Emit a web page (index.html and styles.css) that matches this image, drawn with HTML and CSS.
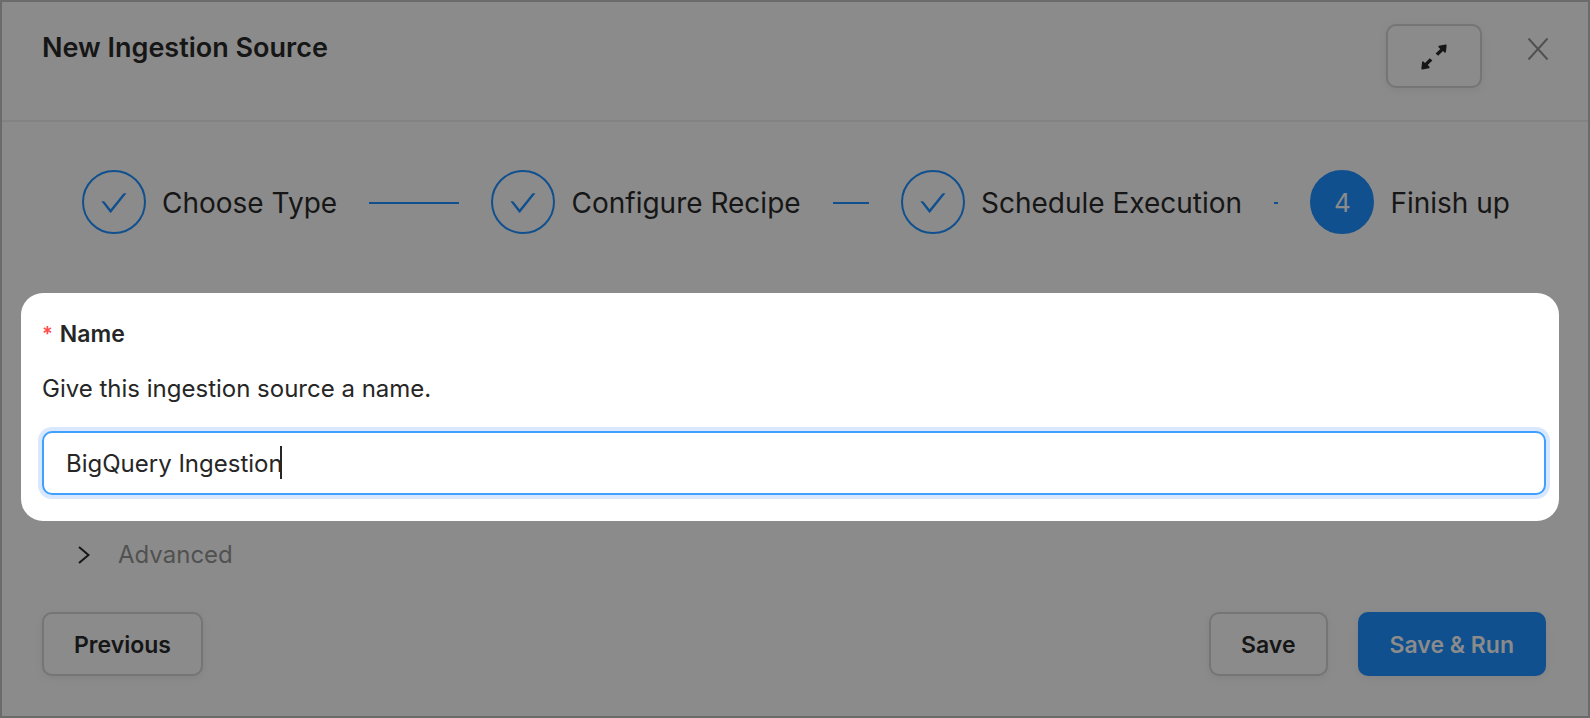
FILE: index.html
```html
<!DOCTYPE html>
<html lang="en">
<head>
<meta charset="utf-8">
<title>New Ingestion Source</title>
<link rel="stylesheet" href="styles.css">
</head>
<body>
<main class="modal">
  <header class="modal-header">
    <h1 class="modal-title">New Ingestion Source</h1>
    <button class="btn btn-expand" type="button" aria-label="Expand">
      <svg width="26" height="26" viewBox="0 0 26 26" fill="currentColor" aria-hidden="true">
        <path id="arrow" d="M14.600 9.600 19.300 4.900 17.600 3.200Q16.800 2.200 18 1.800L24.600.5Q25.800.4 25.600 1.400L24.900 8Q24.500 9.200 23.600 8.400L22 6.900 17.200 11.700Z"/>
        <use href="#arrow" transform="rotate(180 13 13)"/>
      </svg>
    </button>
    <button class="btn-close" type="button" aria-label="Close">
      <svg width="22" height="22" viewBox="0 0 22 22" fill="none" stroke="currentColor" stroke-width="2" aria-hidden="true">
        <path d="M1.500.500 20.500 21.500M20.500.500 1.500 21.500"/>
      </svg>
    </button>
  </header>

  <ol class="steps">
    <li class="step">
      <span class="step-icon"><svg width="26" height="20" viewBox="0 0 26 20" fill="currentColor" aria-hidden="true"><path d="M.4 8.300H2.800Q3.300 8.300 3.600 8.700L9.600 16.300 22.100.7Q22.500.2 23.100.2H25.500L10.200 19.400Q9.600 20 9 19.400Z"/></svg></span>
      <span class="step-title">Choose Type</span>
      <span class="step-line"></span>
    </li>
    <li class="step">
      <span class="step-icon"><svg width="26" height="20" viewBox="0 0 26 20" fill="currentColor" aria-hidden="true"><path d="M.4 8.300H2.800Q3.300 8.300 3.600 8.700L9.600 16.300 22.100.7Q22.500.2 23.100.2H25.500L10.200 19.400Q9.600 20 9 19.400Z"/></svg></span>
      <span class="step-title">Configure Recipe</span>
      <span class="step-line"></span>
    </li>
    <li class="step">
      <span class="step-icon"><svg width="26" height="20" viewBox="0 0 26 20" fill="currentColor" aria-hidden="true"><path d="M.4 8.300H2.800Q3.300 8.300 3.600 8.700L9.600 16.300 22.100.7Q22.500.2 23.100.2H25.500L10.200 19.400Q9.600 20 9 19.400Z"/></svg></span>
      <span class="step-title">Schedule Execution</span>
      <span class="step-line"></span>
    </li>
    <li class="step step-last">
      <span class="step-icon step-icon-active">4</span>
      <span class="step-title">Finish up</span>
    </li>
  </ol>

  <section class="name-panel">
    <label class="field-label" for="name"><span class="required">*</span>Name</label>
    <p class="field-help">Give this ingestion source a name.</p>
    <div class="field">
      <input class="field-input" id="name" type="text" value="BigQuery Ingestion">
      <span class="caret"></span>
    </div>
  </section>

  <button class="advanced" type="button">
    <svg width="12" height="18" viewBox="0 0 12 18" fill="none" stroke="currentColor" stroke-width="2" aria-hidden="true"><path d="M1 1 10.500 9 1 17"/></svg>
    <span class="advanced-text">Advanced</span>
  </button>

  <footer class="actions">
    <button class="btn" type="button">Previous</button>
    <button class="btn btn-save" type="button">Save</button>
    <button class="btn btn-primary" type="button">Save &amp; Run</button>
  </footer>
</main>
</body>
</html>
```
FILE: styles.css
```css
* {
  box-sizing: border-box;
}

body {
  margin: 0;
  background: #8b8b8b;
  color: #161616;
  font-family: Inter, "Liberation Sans", sans-serif;
  font-size: 24px;
  line-height: 40px;
}

button,
input {
  font: inherit;
  color: inherit;
}

.modal {
  min-height: 100vh;
  border: 2px solid #6b6b6b;
  padding-bottom: 40px;
}

.modal-header {
  display: flex;
  align-items: flex-start;
  height: 120px;
  padding: 22px 39px 22px 40px;
  border-bottom: 2px solid #838383;
}

.modal-title {
  margin: 4px auto 0 0;
  font-size: 27px;
  font-weight: 600;
  line-height: 40px;
}

.btn {
  height: 64px;
  padding: 2px 30px 0;
  border: 2px solid #757575;
  border-radius: 10px;
  background: #8b8b8b;
  box-shadow: 0 2px 6px #838383;
  font-size: 23px;
  font-weight: 600;
}

.btn-expand {
  display: grid;
  place-items: center;
  width: 96px;
}

.btn-close {
  display: grid;
  margin: 14px 0 0 45px;
  padding: 0;
  border: 0;
  background: none;
  color: #505050;
}

.steps {
  display: flex;
  margin: 0;
  padding: 48px 78px 0 80px;
  list-style: none;
  font-size: 28px;
}

.step {
  display: flex;
  flex: 1;
  align-items: center;
  min-width: 0;
  white-space: nowrap;
}

.step-last {
  flex: none;
}

.step-icon {
  display: grid;
  flex: none;
  place-items: center;
  width: 64px;
  height: 64px;
  margin-right: 16px;
  padding-top: 2px;
  border: 2px solid #10508e;
  border-radius: 50%;
  color: #10508e;
}

.step-icon-active {
  background: #10508e;
  color: #8b8b8b;
  font-size: 26px;
}

.step-title,
.step-line {
  margin-top: 2px;
}

.step-line {
  flex: 1;
  min-width: 4px;
  height: 2px;
  margin-right: 32px;
  margin-left: 32px;
  background: #10508e;
}

.name-panel {
  margin: 59px 29px 0 19px;
  padding: 21px 13px 26px 21px;
  border-radius: 22px;
  background: #fff;
  color: #262626;
}

.field-label {
  display: flex;
  font-size: 23px;
  font-weight: 600;
}

.required {
  margin-right: 7px;
  color: #ff4d4f;
  font-size: 20px;
}

.field-help {
  margin: 15px 0 22px;
}

.field {
  position: relative;
}

.field-input {
  display: block;
  width: 100%;
  height: 64px;
  padding: 0 22px;
  border: 2px solid #40a0ff;
  border-radius: 10px;
  outline: 0;
  background: #fff;
  box-shadow: 0 0 0 4px #d9e8ff;
}

.caret {
  position: absolute;
  top: 15px;
  left: 238px;
  width: 2px;
  height: 33px;
  background: #262626;
}

.advanced {
  display: flex;
  gap: 28px;
  align-items: center;
  margin: 14px 0 37px 76px;
  padding: 0;
  border: 0;
  background: none;
}

.advanced-text {
  color: #515151;
}

.actions {
  display: flex;
  gap: 30px;
  padding: 0 42px 0 40px;
}

.btn-save {
  margin-left: auto;
}

.btn-primary {
  border-color: #10508e;
  background: #10508e;
  color: #8b8b8b;
}
```
